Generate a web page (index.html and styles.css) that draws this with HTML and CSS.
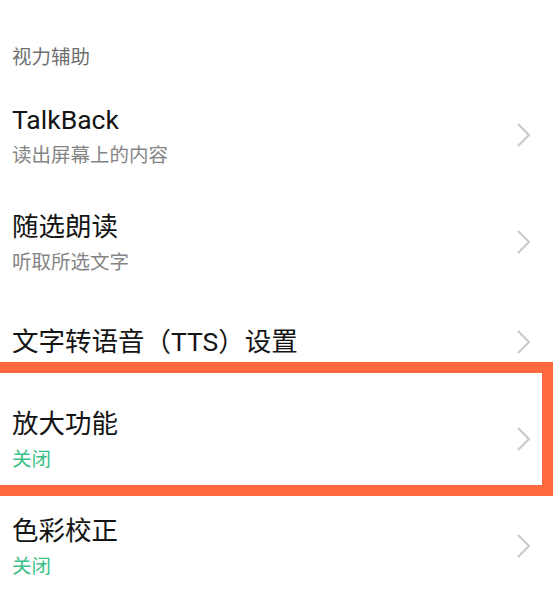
FILE: index.html
```html
<!DOCTYPE html>
<html lang="zh-CN">
<head>
<meta charset="utf-8">
<title>视力辅助</title>
<link rel="stylesheet" href="styles.css">
</head>
<body>
<div class="page">
  <div class="section-title">视力辅助</div>
  <ul class="list">
    <li class="row two">
      <div class="text">
        <div class="title">TalkBack</div>
        <div class="sub">读出屏幕上的内容</div>
      </div>
      <svg class="chev" viewBox="0 0 14 24" width="14" height="24"><path d="M1.5 1.5 L12 12 L1.5 22.5" fill="none" stroke="#c9c9c9" stroke-width="2" stroke-linecap="round" stroke-linejoin="round"/></svg>
    </li>
    <li class="row two">
      <div class="text">
        <div class="title">随选朗读</div>
        <div class="sub">听取所选文字</div>
      </div>
      <svg class="chev" viewBox="0 0 14 24" width="14" height="24"><path d="M1.5 1.5 L12 12 L1.5 22.5" fill="none" stroke="#c9c9c9" stroke-width="2" stroke-linecap="round" stroke-linejoin="round"/></svg>
    </li>
    <li class="row one">
      <div class="text">
        <div class="title">文字转语音（TTS）设置</div>
      </div>
      <svg class="chev" viewBox="0 0 14 24" width="14" height="24"><path d="M1.5 1.5 L12 12 L1.5 22.5" fill="none" stroke="#c9c9c9" stroke-width="2" stroke-linecap="round" stroke-linejoin="round"/></svg>
    </li>
    <li class="row two">
      <div class="text">
        <div class="title">放大功能</div>
        <div class="sub green">关闭</div>
      </div>
      <svg class="chev" viewBox="0 0 14 24" width="14" height="24"><path d="M1.5 1.5 L12 12 L1.5 22.5" fill="none" stroke="#c9c9c9" stroke-width="2" stroke-linecap="round" stroke-linejoin="round"/></svg>
    </li>
    <li class="row two">
      <div class="text">
        <div class="title">色彩校正</div>
        <div class="sub green">关闭</div>
      </div>
      <svg class="chev" viewBox="0 0 14 24" width="14" height="24"><path d="M1.5 1.5 L12 12 L1.5 22.5" fill="none" stroke="#c9c9c9" stroke-width="2" stroke-linecap="round" stroke-linejoin="round"/></svg>
    </li>
  </ul>
  <div class="highlight"></div>
</div>
</body>
</html>
```

FILE: styles.css
```css
html, body {
  margin: 0;
  padding: 0;
  background: #ffffff;
}

.page {
  position: relative;
  width: 553px;
  height: 610px;
  overflow: hidden;
  font-family: Roboto, "Noto Sans CJK SC", sans-serif;
}

.section-title {
  padding: 45px 0 0 12px;
  height: 39.5px;
  font-size: 19.5px;
  line-height: 26px;
  color: #6f6f6f;
}

.list {
  list-style: none;
  margin: 0;
  padding: 0;
}

.row {
  display: flex;
  align-items: center;
  justify-content: space-between;
  padding: 0 22px 0 12px;
}

.row.two {
  height: 107px;
}

.row.one {
  height: 86px;
  padding-bottom: 4px;
}

.text {
  display: flex;
  flex-direction: column;
}

.title {
  font-size: 26.5px;
  line-height: 36px;
  color: #141414;
}

.sub {
  font-size: 19.5px;
  line-height: 36px;
  color: #858585;
}

.sub.green {
  color: #3cbf88;
}

.chev {
  display: block;
  margin-top: -6px;
}

.row.one .chev {
  margin-top: 0;
}

.highlight {
  position: absolute;
  top: 362px;
  left: -20px;
  right: 0;
  height: 112px;
  border: 11px solid #ff6a3c;
}
```
